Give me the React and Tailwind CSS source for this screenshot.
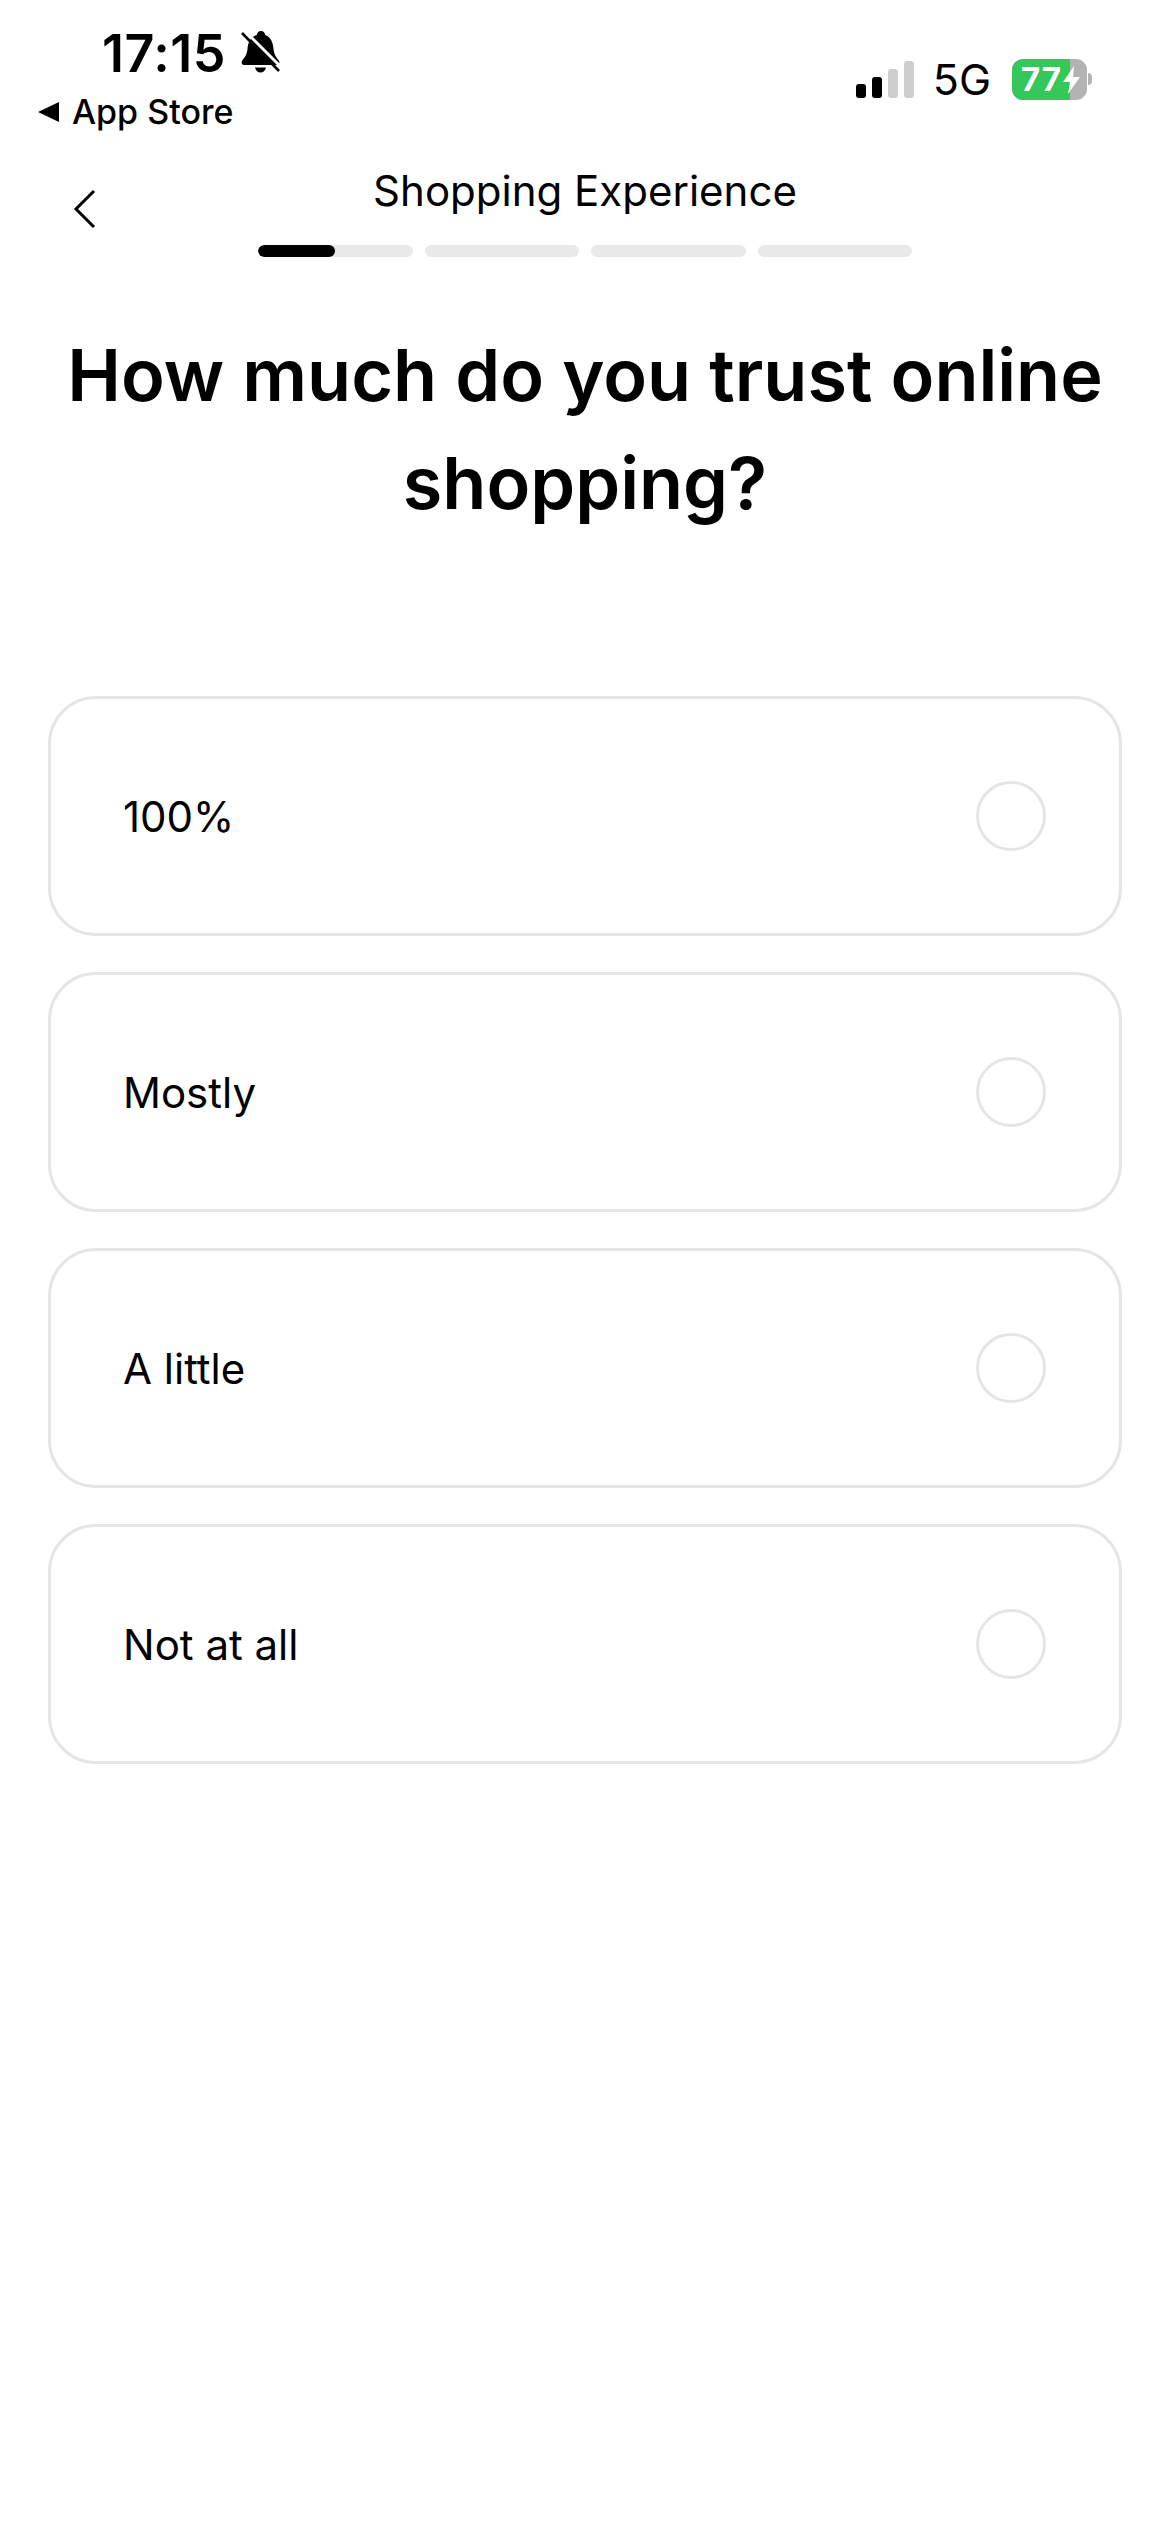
const font = { fontFamily: 'Inter, "Liberation Sans", sans-serif' };

function BellSlash() {
  return (
    <svg width="40" height="44" viewBox="0 0 40 44" className="ml-[15px] mt-[-2px]">
      <path d="M20 0c-2.500 0-4 1.800-4.300 4C9 6 7 12 6.500 18 6 24 3 27 1 30c-1 2 0 4 2 4h33c2 0 3-2 2-4-2-3-5-6-5.500-12-.5-6-2.500-12-8.200-14C24 1.800 22.500 0 20 0z" fill="#000" />
      <path d="M14 36.500h11c-.5 3-3 5-5.500 5s-5-2-5.500-5z" fill="#000" />
      <path d="M1 0 39 38" stroke="#fff" strokeWidth="3" transform="translate(2 -1)" />
      <path d="M1 2 38 40" stroke="#000" strokeWidth="2.600" />
    </svg>
  );
}

function Signal() {
  const bars = [
    ['h-[14px]', 'bg-black'],
    ['h-[21px]', 'bg-black'],
    ['h-[29px]', 'bg-[#cdcdcd]'],
    ['h-[37px]', 'bg-[#cdcdcd]'],
  ];
  return (
    <div className="flex items-end gap-[6px]">
      {bars.map(([h, c], i) => (
        <div key={i} className={`w-[10px] rounded-[3px] ${h} ${c}`} />
      ))}
    </div>
  );
}

function Battery() {
  return (
    <div className="flex items-center">
      <div className="relative flex h-[41px] w-[75px] items-center overflow-hidden rounded-[11px] bg-[#b3b3b3]">
        <div className="flex h-full w-[58px] items-center bg-[#34c759] pl-[9px]">
          <span className="text-[33px] font-bold leading-none tracking-[1px] text-white">77</span>
        </div>
        <svg width="18" height="28" viewBox="0 0 18 28" className="absolute left-[51px] top-[7px]">
          <path d="M11 0 0 16h7l-2 12L17 11h-7z" fill="#fff" />
        </svg>
      </div>
      <div className="ml-[1px] h-[12px] w-[4px] rounded-r-full bg-[#b3b3b3]" />
    </div>
  );
}

function StatusBar() {
  return (
    <div className="flex h-[164px] items-start justify-between">
      <div className="pl-[38px] pt-[31px]">
        <div className="flex items-center pl-[64px]">
          <span className="text-[52px] font-semibold leading-[46px] tracking-[0.5px] text-black">17:15</span>
          <BellSlash />
        </div>
        <div className="mt-[18px] flex items-center">
          <svg width="22" height="22" viewBox="0 0 22 22"><path d="M0 11 21 1v20z" fill="#000" /></svg>
          <span className="ml-[12px] text-[34px] font-medium leading-[34px] text-black">App Store</span>
        </div>
      </div>
      <div className="flex items-center pr-[78px] pt-[57px]">
        <Signal />
        <span className="ml-[19px] text-[43px] font-normal leading-[44px] text-black">5G</span>
        <div className="ml-[21px]"><Battery /></div>
      </div>
    </div>
  );
}

function Header() {
  const segs = [0, 1, 2, 3];
  return (
    <div className="relative flex flex-col items-center">
      <svg width="24" height="40" viewBox="0 0 24 40" className="absolute left-[73px] top-[25px]">
        <path d="M21 2 3 20l18 18" fill="none" stroke="#000" strokeWidth="3" />
      </svg>
      <div className="text-[42px] font-normal leading-[54px] text-black">Shopping Experience</div>
      <div className="mt-[27px] flex w-[654px] gap-[12px]">
        {segs.map((s) => (
          <div key={s} className="h-[12px] flex-1 overflow-hidden rounded-full bg-[#e9e9e9]">
            {s === 0 && <div className="h-full w-1/2 rounded-full bg-black" />}
          </div>
        ))}
      </div>
    </div>
  );
}

function Option({ label }) {
  return (
    <div className="flex h-[240px] items-center justify-between rounded-[48px] border-[3px] border-[#e5e5e5] pl-[72px] pr-[73px]">
      <span className="pt-[2px] text-[42px] leading-[54px] text-black">{label}</span>
      <div className="h-[70px] w-[70px] rounded-full border-[3px] border-[#e5e5e5]" />
    </div>
  );
}

export default function App() {
  return (
    <div style={font} className="min-h-[2532px] w-[1170px] bg-white">
      <StatusBar />
      <Header />
      <h1 className="mt-[64px] px-[48px] text-center text-[72px] font-semibold leading-[108px] text-black">
        How much do you trust online shopping?
      </h1>
      <div className="mt-[159px] flex flex-col gap-[36px] px-[48px]">
        <Option label="100%" />
        <Option label="Mostly" />
        <Option label="A little" />
        <Option label="Not at all" />
      </div>
    </div>
  );
}
